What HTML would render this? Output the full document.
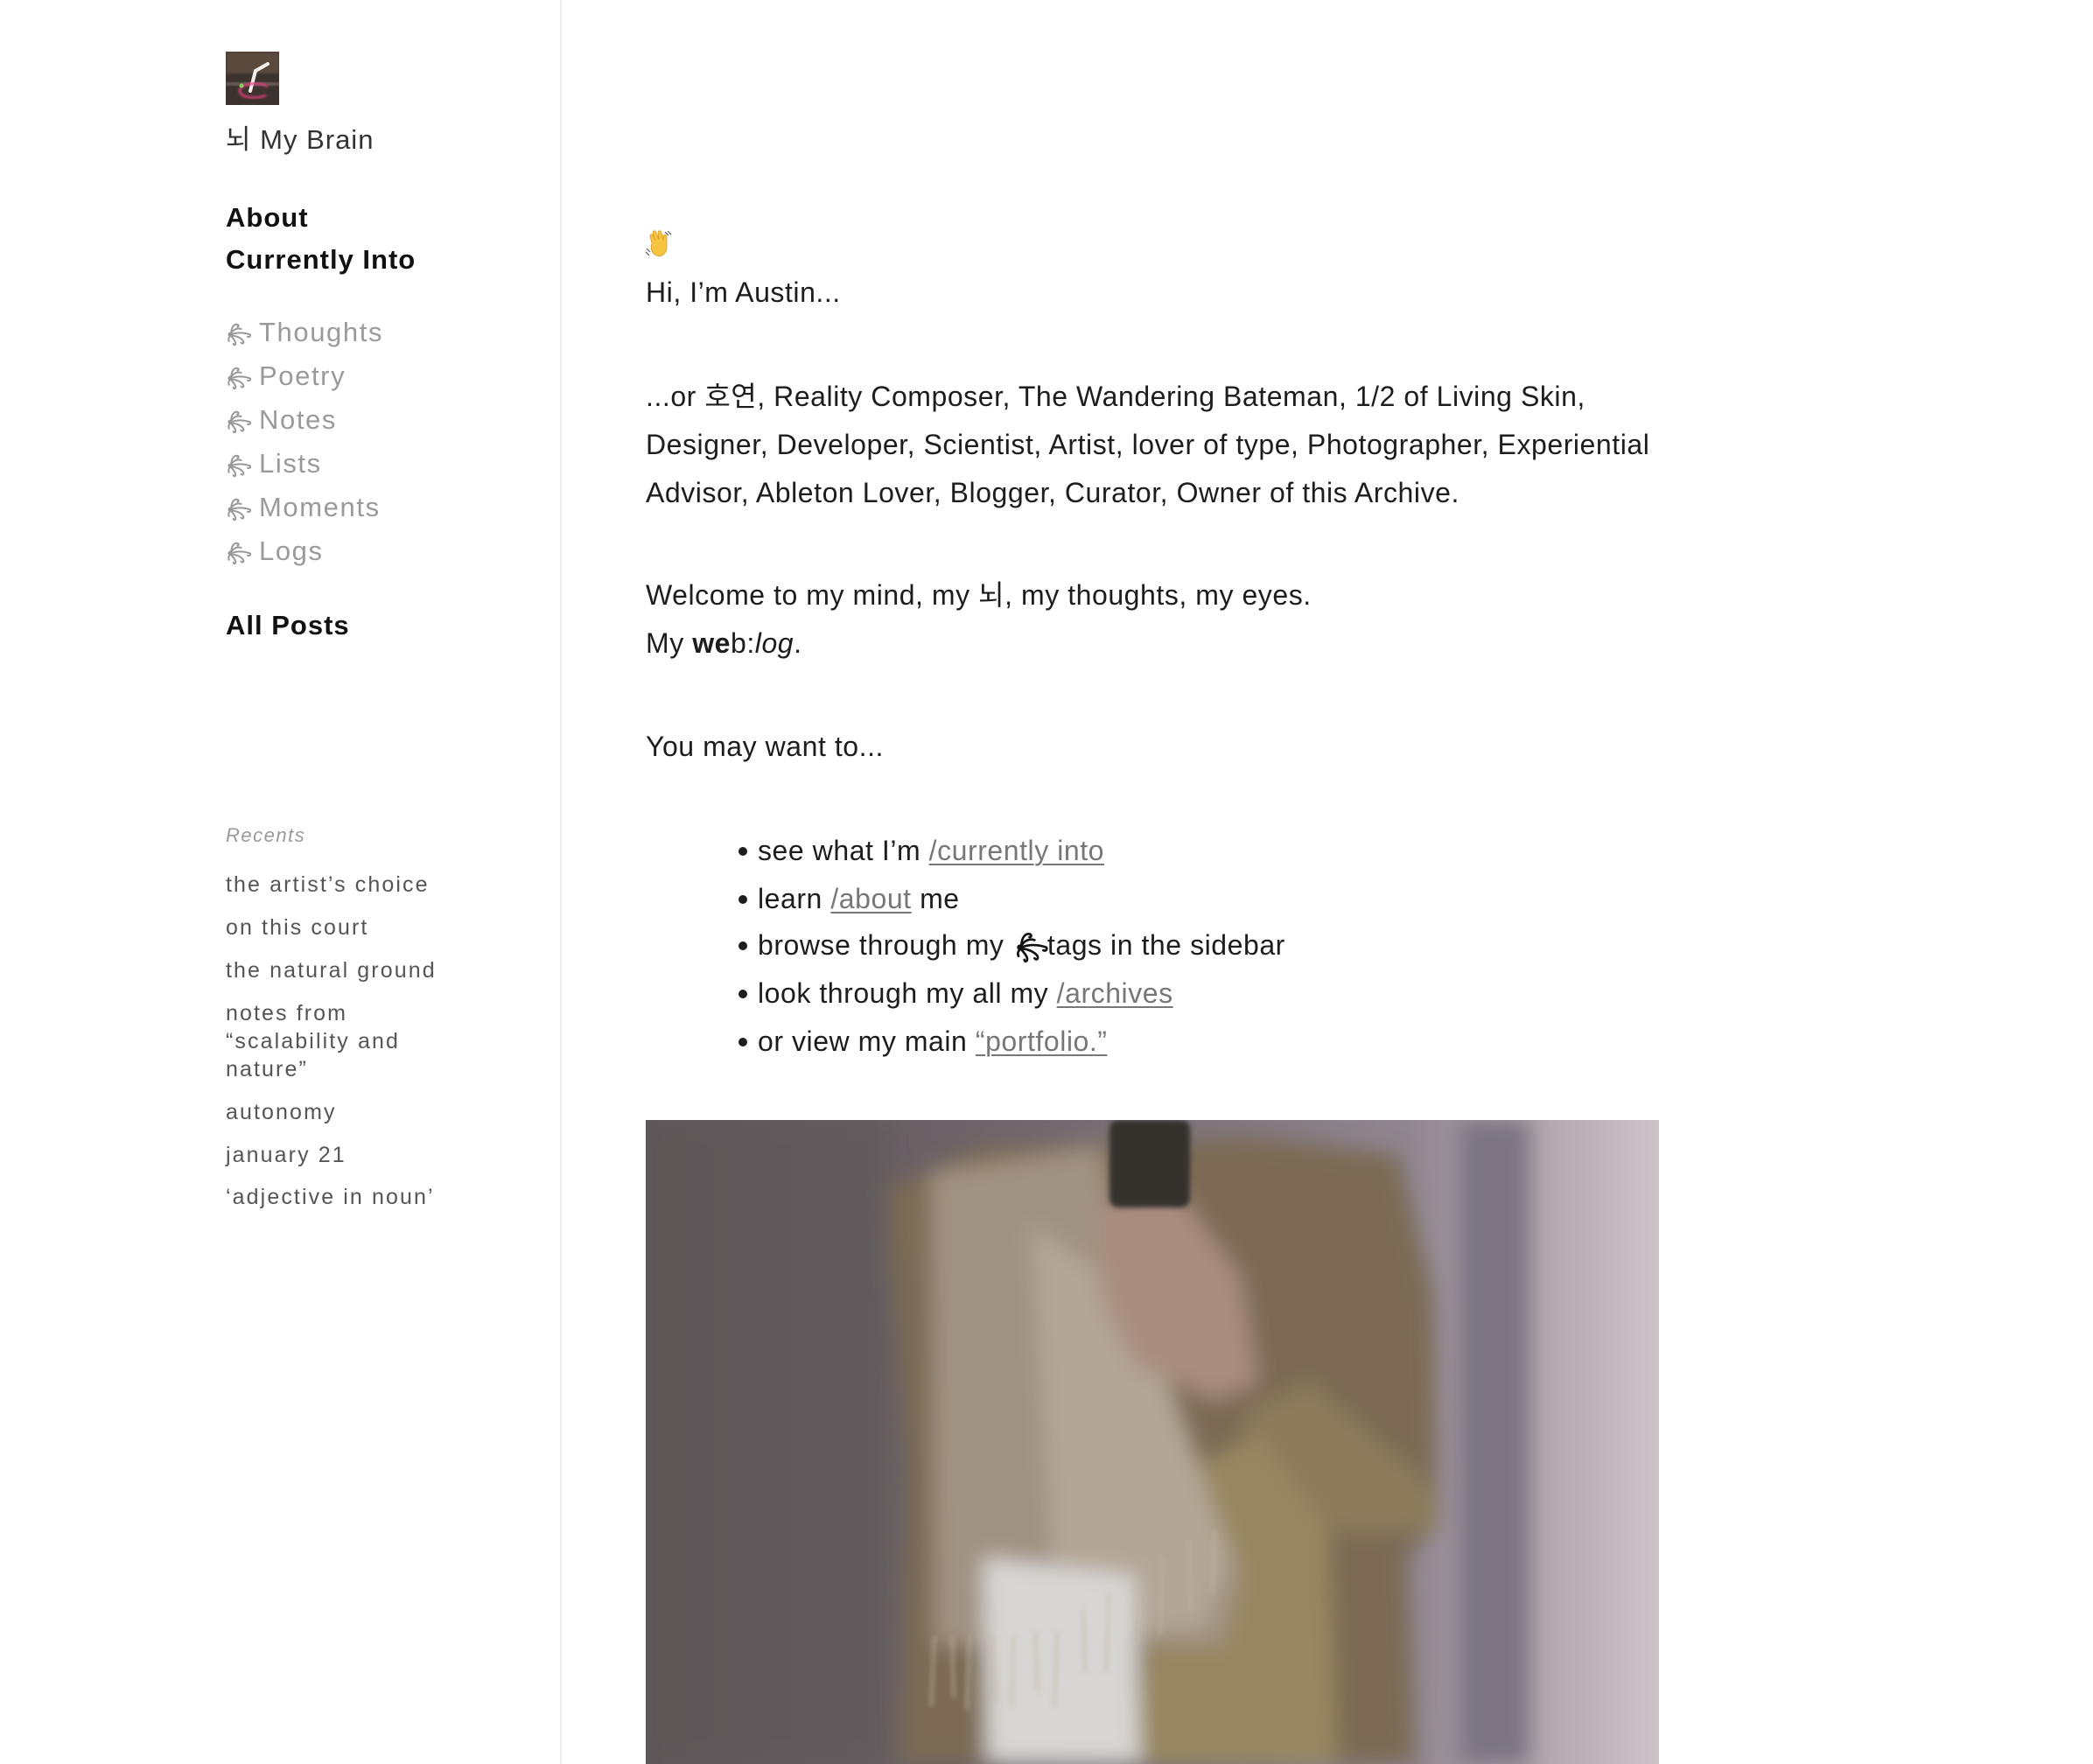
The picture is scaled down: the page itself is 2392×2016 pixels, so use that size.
<!DOCTYPE html>
<html><head><meta charset="utf-8"><style>
*{margin:0;padding:0;box-sizing:border-box}
html,body{width:2392px;height:2016px;overflow:hidden;background:#fff}
body{font-family:"Liberation Sans","Noto Sans CJK KR",sans-serif;color:#1d1d1d;position:relative}
.a{position:absolute;white-space:nowrap}
.side{position:absolute;left:640px;top:0;width:2px;height:2016px;background:#ececec}
.brand{left:258px;font-size:31px;color:#333;letter-spacing:1px;line-height:40px}
.nav{left:258px;font-size:31px;font-weight:bold;color:#111;letter-spacing:1px}
.tag{left:258px;font-size:31px;color:#9a9a9a;letter-spacing:1.6px}
.tag svg{width:30px;height:30px;vertical-align:-6px;margin-right:8px}
.rec{left:258px;top:942px;font-size:22px;font-style:italic;color:#9a9a9a;letter-spacing:1.5px}
.r{left:258px;font-size:25px;color:#555;letter-spacing:2.1px;line-height:32px}
.m{left:738px;font-size:32px;color:#1d1d1d;line-height:38px;letter-spacing:0.55px}
.li{left:866px;font-size:32px;line-height:38px;letter-spacing:0.55px}
.li:before{content:"";position:absolute;left:-22px;top:15px;width:10px;height:10px;border-radius:50%;background:#1d1d1d}
a{color:#777;text-decoration:underline;text-underline-offset:4px;text-decoration-thickness:1.5px}
</style></head><body>
<svg class="a" style="left:258px;top:59px" width="61" height="61" viewBox="0 0 61 61">
<defs><filter id="b"><feGaussianBlur stdDeviation="1.2"/></filter></defs>
<rect width="61" height="61" fill="#3d332e"/>
<rect x="0" y="0" width="61" height="25" fill="#5a4a3c" filter="url(#b)"/>
<rect x="0" y="35" width="61" height="4" fill="#6b5e58" filter="url(#b)"/>
<path d="M28 45 L34 22 L48 14" stroke="#f4f0ee" stroke-width="4" fill="none" stroke-linecap="round"/>
<path d="M48 40 C38 34 18 36 16 44 C15 52 32 55 46 50" stroke="#e23c7a" stroke-width="2.5" fill="none" filter="url(#b)"/>
<circle cx="18" cy="39" r="2.5" fill="#7ed060"/>
</svg>
<div class="a brand" style="top:140px">뇌 My Brain</div>
<div class="side"></div>
<div class="a nav" style="top:231px">About</div>
<div class="a nav" style="top:279px">Currently Into</div>

<svg width="0" height="0" style="position:absolute"><defs><g id="ic" fill="none" stroke="currentColor" stroke-width="1.6" stroke-linecap="round">
<circle cx="4" cy="13" r="1.2" fill="currentColor"/>
<path d="M5 12 C5 6 8 3 11 4 C12 4.5 12 6 10.5 6"/>
<path d="M5 12 C7 8 11 7 14 8"/>
<path d="M5 13 C10 11 16 11 22 13 C23 14 22 16 20 15"/>
<path d="M5 14 C9 14 14 16 16 19 C17 21 15 22 14 20.5"/>
<path d="M5 14.5 C7 17 9 19 9 21 C9 23 7 23 7 21.5"/>
<path d="M5 13.5 C3 15 2 17 3 19"/>
</g></defs></svg>

<div class="a tag" style="top:362px"><svg viewBox="0 0 24 24" style="color:#999"><use href="#ic"/></svg>Thoughts</div>
<div class="a tag" style="top:412px"><svg viewBox="0 0 24 24" style="color:#999"><use href="#ic"/></svg>Poetry</div>
<div class="a tag" style="top:462px"><svg viewBox="0 0 24 24" style="color:#999"><use href="#ic"/></svg>Notes</div>
<div class="a tag" style="top:512px"><svg viewBox="0 0 24 24" style="color:#999"><use href="#ic"/></svg>Lists</div>
<div class="a tag" style="top:562px"><svg viewBox="0 0 24 24" style="color:#999"><use href="#ic"/></svg>Moments</div>
<div class="a tag" style="top:612px"><svg viewBox="0 0 24 24" style="color:#999"><use href="#ic"/></svg>Logs</div>
<div class="a nav" style="top:697px">All Posts</div>

<div class="a rec">Recents</div>
<div class="a r" style="top:995px">the artist’s choice</div>
<div class="a r" style="top:1044px">on this court</div>
<div class="a r" style="top:1093px">the natural ground</div>
<div class="a r" style="top:1142px">notes from<br>“scalability and<br>nature”</div>
<div class="a r" style="top:1255px">autonomy</div>
<div class="a r" style="top:1304px">january 21</div>
<div class="a r" style="top:1352px">‘adjective in noun’</div>

<svg class="a" style="left:736px;top:262px" width="36" height="34" viewBox="0 0 36 34">
<g stroke="#555" stroke-width="1.2"><path d="M24 3 l4 4 M27 2 l4 4 M3 22 l4 4 M2 26 l4 4"/></g>
<path d="M9 16 L7 8 C7 5 10 5 11 8 L13 13 L10 4 C10 1 13 1 14 4 L17 12 L16 4 C16 1 19 1 20 4 L22 13 L22 8 C23 5 26 6 26 9 L26 20 C26 28 20 32 14 30 C10 28 7 24 9 16 Z" fill="#f7c442" stroke="#d99a20" stroke-width="0.8"/>
</svg>
<div class="a m" style="top:315px">Hi, I’m Austin...</div>
<div class="a m" style="top:434px">...or 호연, Reality Composer, The Wandering Bateman, 1/2 of Living Skin,</div>
<div class="a m" style="top:489px">Designer, Developer, Scientist, Artist, lover of type, Photographer, Experiential</div>
<div class="a m" style="top:544px">Advisor, Ableton Lover, Blogger, Curator, Owner of this Archive.</div>
<div class="a m" style="top:661px">Welcome to my mind, my 뇌, my thoughts, my eyes.</div>
<div class="a m" style="top:716px">My <b>we</b>b:<i>log</i>.</div>
<div class="a m" style="top:834px">You may want to...</div>
<div class="a li" style="top:953px">see what I’m <a>/currently into</a></div>
<div class="a li" style="top:1008px">learn <a>/about</a> me</div>
<div class="a li" style="top:1061px">browse through my <svg viewBox="0 0 24 24" style="width:44px;height:40px;vertical-align:-10px;color:#111;margin-right:-4px"><use href="#ic"/></svg>tags in the sidebar</div>
<div class="a li" style="top:1116px">look through my all my <a>/archives</a></div>
<div class="a li" style="top:1171px">or view my main <a>“portfolio.”</a></div>

<svg class="a" style="left:738px;top:1280px" width="1158" height="736" viewBox="0 0 1158 736" preserveAspectRatio="none">
<defs>
<filter id="s"><feGaussianBlur stdDeviation="12"/></filter>
<filter id="s2"><feGaussianBlur stdDeviation="3"/></filter>
<linearGradient id="bg" x1="0" x2="1"><stop offset="0" stop-color="#5f5759"/><stop offset="0.3" stop-color="#6a6266"/><stop offset="0.75" stop-color="#8f8690"/><stop offset="1" stop-color="#cdc3c8"/></linearGradient>
</defs>
<rect width="1158" height="736" fill="url(#bg)"/>
<g filter="url(#s)">
<rect x="930" y="0" width="80" height="736" fill="#7c7480"/>
<path d="M274 80 L380 30 L700 20 L860 40 L900 200 L905 460 L870 500 L880 736 L290 736 L300 400 Z" fill="#7b6b55"/>
<path d="M690 330 L760 300 L900 420 L905 470 L780 470 L680 360 Z" fill="#8c7c5c"/>
<path d="M620 400 L700 360 L780 470 L790 736 L560 736 L580 500 Z" fill="#978760"/>
<path d="M326 60 L520 30 L560 250 L680 520 L660 600 L330 600 Z" fill="#a09282"/>
<path d="M440 120 L560 200 L670 500 L640 580 L470 590 Z" fill="#b2a696"/>
<path d="M385 500 L560 520 L565 736 L390 736 Z" fill="#d8d6d4"/>
<path d="M518 100 L600 70 L680 180 L700 300 L650 320 L560 280 L520 200 Z" fill="#a88c80"/>
<rect x="0" y="0" width="280" height="736" fill="#5a5254" opacity="0.35"/>
</g>
<g filter="url(#s2)">
<rect x="530" y="0" width="92" height="100" rx="10" fill="#34302e"/>
<g stroke="#c2b6a6" stroke-width="3" opacity="0.7">
<path d="M330 590 l-4 80 M350 590 l2 70 M370 590 l-3 85 M395 590 l4 75 M420 590 l-2 80 M445 585 l3 70 M470 585 l-3 85 M500 560 l2 70 M530 540 l-4 90 M560 520 l3 80 M590 500 l-2 90 M620 480 l3 80 M650 470 l-2 70"/>
</g>
</g>
</svg>
</body></html>
